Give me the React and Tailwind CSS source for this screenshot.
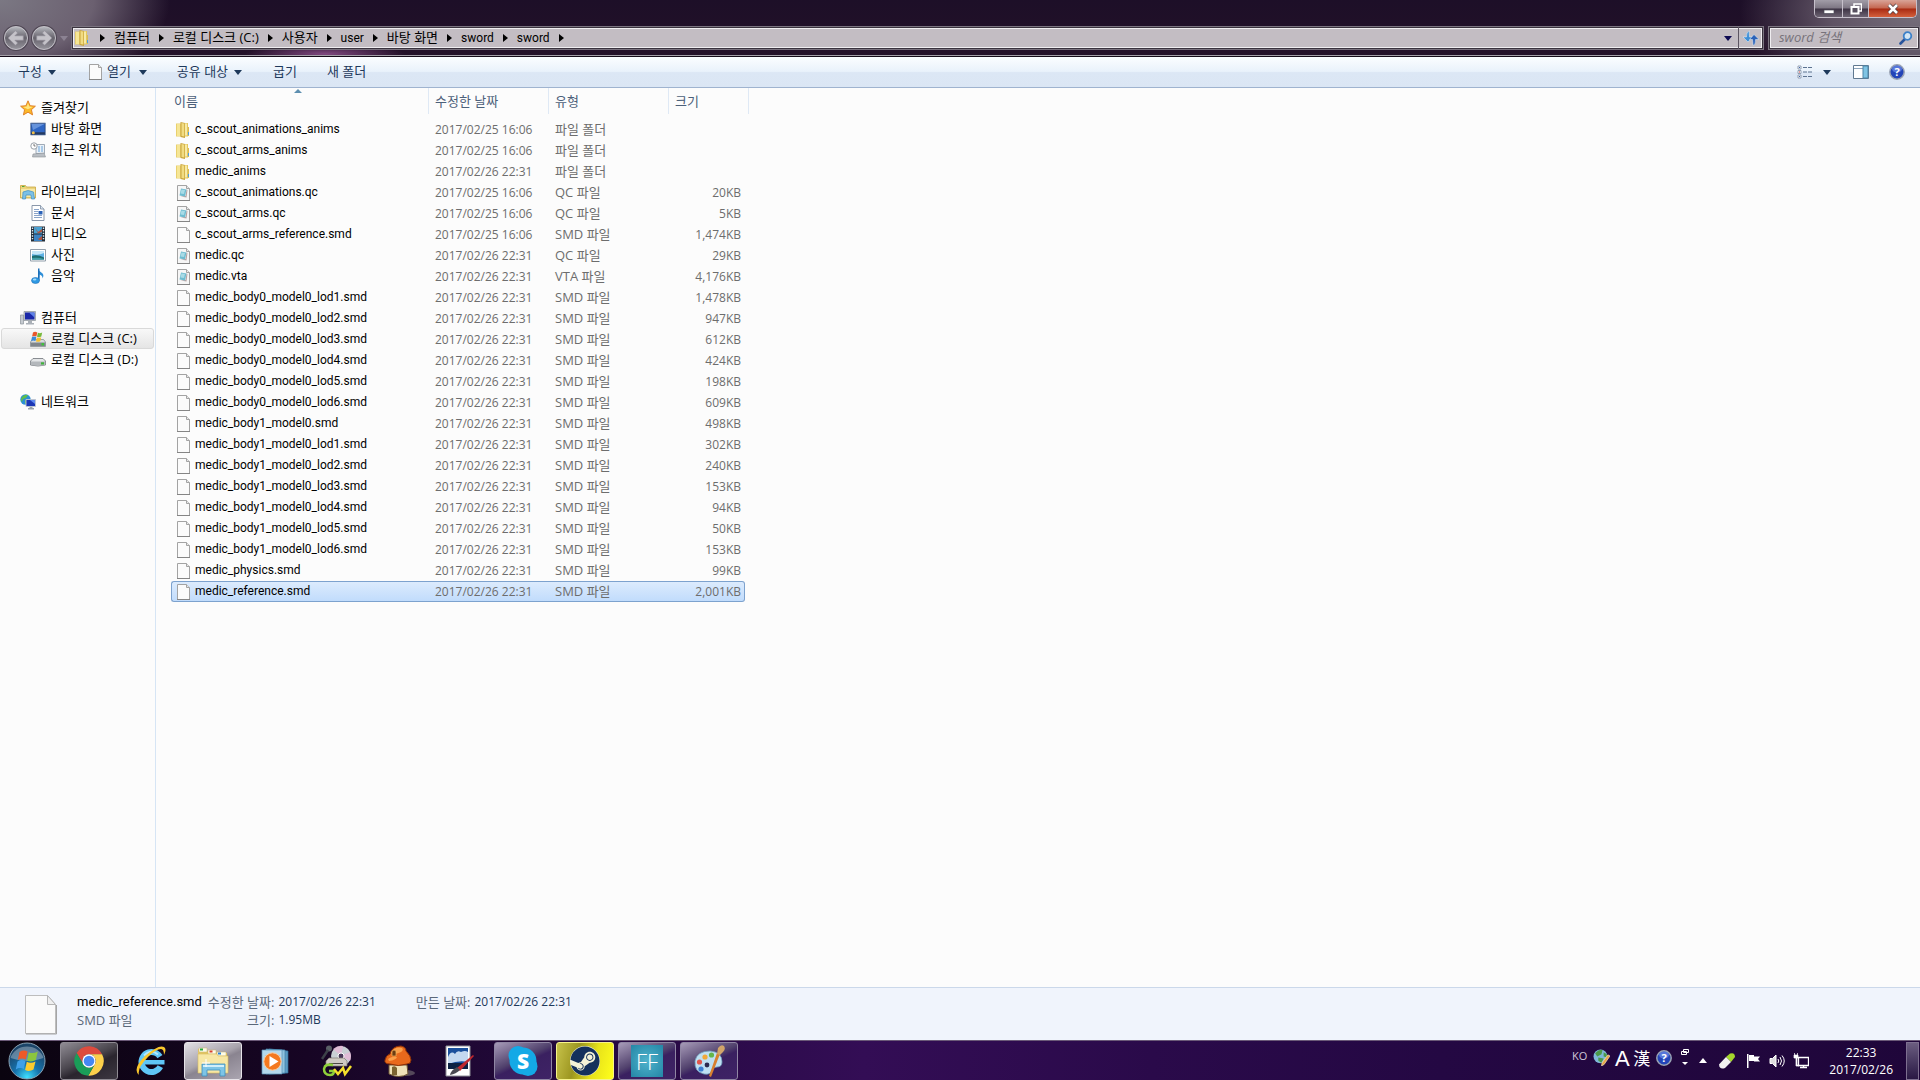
import React, { useState } from "react";
import { FaSteam } from "react-icons/fa";

const FILES = [
  ["c_scout_animations_anims", "2017/02/25 16:06", "파일 폴더", "", "folder"],
  ["c_scout_arms_anims", "2017/02/25 16:06", "파일 폴더", "", "folder"],
  ["medic_anims", "2017/02/26 22:31", "파일 폴더", "", "folder"],
  ["c_scout_animations.qc", "2017/02/25 16:06", "QC 파일", "20KB", "note"],
  ["c_scout_arms.qc", "2017/02/25 16:06", "QC 파일", "5KB", "note"],
  ["c_scout_arms_reference.smd", "2017/02/25 16:06", "SMD 파일", "1,474KB", "file"],
  ["medic.qc", "2017/02/26 22:31", "QC 파일", "29KB", "note"],
  ["medic.vta", "2017/02/26 22:31", "VTA 파일", "4,176KB", "note"],
  ["medic_body0_model0_lod1.smd", "2017/02/26 22:31", "SMD 파일", "1,478KB", "file"],
  ["medic_body0_model0_lod2.smd", "2017/02/26 22:31", "SMD 파일", "947KB", "file"],
  ["medic_body0_model0_lod3.smd", "2017/02/26 22:31", "SMD 파일", "612KB", "file"],
  ["medic_body0_model0_lod4.smd", "2017/02/26 22:31", "SMD 파일", "424KB", "file"],
  ["medic_body0_model0_lod5.smd", "2017/02/26 22:31", "SMD 파일", "198KB", "file"],
  ["medic_body0_model0_lod6.smd", "2017/02/26 22:31", "SMD 파일", "609KB", "file"],
  ["medic_body1_model0.smd", "2017/02/26 22:31", "SMD 파일", "498KB", "file"],
  ["medic_body1_model0_lod1.smd", "2017/02/26 22:31", "SMD 파일", "302KB", "file"],
  ["medic_body1_model0_lod2.smd", "2017/02/26 22:31", "SMD 파일", "240KB", "file"],
  ["medic_body1_model0_lod3.smd", "2017/02/26 22:31", "SMD 파일", "153KB", "file"],
  ["medic_body1_model0_lod4.smd", "2017/02/26 22:31", "SMD 파일", "94KB", "file"],
  ["medic_body1_model0_lod5.smd", "2017/02/26 22:31", "SMD 파일", "50KB", "file"],
  ["medic_body1_model0_lod6.smd", "2017/02/26 22:31", "SMD 파일", "153KB", "file"],
  ["medic_physics.smd", "2017/02/26 22:31", "SMD 파일", "99KB", "file"],
  ["medic_reference.smd", "2017/02/26 22:31", "SMD 파일", "2,001KB", "file"],
];

const CRUMBS = ["컴퓨터", "로컬 디스크 (C:)", "사용자", "user", "바탕 화면", "sword", "sword"];

/* ---------- small icons (16px grid) ---------- */

function Icon({ children, className = "w-4 h-4" }) {
  return (
    <svg viewBox="0 0 16 16" className={`${className} shrink-0`} aria-hidden="true">
      {children}
    </svg>
  );
}

function FolderIcon() {
  return (
    <Icon>
      <path d="M0 1.500h5v13H0z" fill="#e9d06e" />
      <path d="M1 2h3v12H1z" fill="#f6e696" />
      <path d="M4.500 0l4.500 1v15l-4.500-1z" fill="#c9a43a" />
      <path d="M5.500 1l2.500 .5v13l-2.500-.5z" fill="#f1dc83" />
      <path d="M8.500 1H12v13.500H8.500z" fill="#e3c75e" />
      <path d="M9 1.500h2v12H9z" fill="#f7eaa6" />
      <path d="M12 5h1v9h-1z" fill="#d9bb55" />
      <path d="M12 10h1v3h-1z" fill="#4f9fe0" />
    </Icon>
  );
}

function FileIcon() {
  return (
    <Icon>
      <path d="M1.500 .5h9l3 3v12h-12z" fill="#fbfbfb" stroke="#a3a3a3" />
      <path d="M10.500 .5v3h3" fill="#e8e8e8" stroke="#a3a3a3" />
      <path d="M1 15.500h13" stroke="#858585" />
    </Icon>
  );
}

function NoteIcon() {
  return (
    <Icon>
      <path d="M1.500 .5h9l3 3v12h-12z" fill="#f6f6f6" stroke="#a3a3a3" />
      <path d="M10.500 .5v3h3" fill="#e8e8e8" stroke="#a3a3a3" />
      <path d="M1 15.500h13" stroke="#858585" />
      <path d="M10.500 4.500l1 .5-1 7.500-6-1 5-.5z" fill="#b9a3a3" />
      <path d="M5 3.500l5.500 1-1.500 7-5.500-1z" fill="#6fbcd0" />
      <path d="M5.500 4.500l3.500 .5-1 4-3.500-.5z" fill="#a9dbe6" />
    </Icon>
  );
}

const FILE_ICONS = { folder: FolderIcon, note: NoteIcon, file: FileIcon };

function StarIcon() {
  return (
    <Icon>
      <path d="M8 .8l2.100 4.900 5.300.5-4 3.500 1.200 5.200L8 12.200l-4.600 2.700 1.200-5.200-4-3.500 5.300-.5z" fill="#fbb829" stroke="#dd7b22" strokeWidth=".9" />
      <path d="M8 3l1.300 3.500 3.600.4-5 2.300-4.800-2.300 3.600-.4z" fill="#ffe680" />
    </Icon>
  );
}

function DesktopIcon() {
  return (
    <Icon>
      <path d="M.5 2h15v12h-15z" fill="#2a4f8f" stroke="#7f93b3" strokeWidth=".8" />
      <path d="M1.500 3h13v8h-13z" fill="#2f66c4" />
      <path d="M1.500 3h13L3 9z" fill="#7ea7e6" opacity=".7" />
      <path d="M1 11.500h14v2h-14z" fill="#243a60" />
      <circle cx="3.300" cy="11.800" r="1.500" fill="#f2c04a" />
    </Icon>
  );
}

function RecentIcon() {
  return (
    <Icon>
      <path d="M6 2.500h8.500v9h-8.500z" fill="#e9f1f8" stroke="#8c98a6" strokeWidth=".8" />
      <path d="M8 5h2M11 5h2M8 7h2M11 7h2M8 9h2M11 9h2" stroke="#6aa3d8" />
      <path d="M3 12l11-1 1.500 4h-13z" fill="#b9bec4" stroke="#8b9096" strokeWidth=".6" />
      <circle cx="4" cy="4" r="3.200" fill="#fff" stroke="#8f979f" strokeWidth=".9" />
      <path d="M4 2v2h1.500" fill="none" stroke="#555" strokeWidth=".8" />
    </Icon>
  );
}

function LibraryIcon() {
  return (
    <Icon>
      <path d="M.5 1.500h5l1 1.500h9v11h-15z" fill="#ecd47b" stroke="#c9a640" strokeWidth=".8" />
      <path d="M1 5h14v8h-14z" fill="#f7e8a6" />
      <path d="M2 2.500h2.500" stroke="#4eaa3f" />
      <path d="M3 8q5-3 10.500 0l1 7h-3l-.5-4h-5l-.5 4h-3z" fill="#7cc0e6" stroke="#3f8fc4" strokeWidth=".7" />
    </Icon>
  );
}

function DocIcon() {
  return (
    <Icon>
      <path d="M2 .5h8.500l3.500 3.500v11.500h-12z" fill="#fff" stroke="#7e8ca0" strokeWidth=".9" />
      <path d="M10.500 .5v3.500h3.500" fill="#dde7f2" stroke="#7e8ca0" strokeWidth=".8" />
      <path d="M4 4.500h5M4 6.500h4M4 8.500h4M4 10.500h8M4 12.500h8" stroke="#8aa4c8" />
      <path d="M8.500 6h4v3.500h-4z" fill="#2a62b8" />
    </Icon>
  );
}

function VideoIcon() {
  return (
    <Icon>
      <path d="M1 .5h14v15h-14z" fill="#222d38" />
      <path d="M4 1h8v6.500h-8z" fill="#49a1d2" />
      <path d="M4 8.500h8v6.500h-8z" fill="#3a83c4" />
      <path d="M4.500 1l3.500 5 4-3v3l-4 1.500zM4.500 9l3.500 4 4-3v4h-3z" fill="#b2543e" />
      <path d="M2.500 1.500v13M13.500 1.500v13" stroke="#dfe7ee" strokeWidth="1.400" strokeDasharray="1.400 1.200" />
    </Icon>
  );
}

function PictureIcon() {
  return (
    <Icon>
      <path d="M.5 2.500h15v11.500h-15z" fill="#fff" stroke="#8794a2" strokeWidth=".9" />
      <path d="M2 4h12v8.500h-12z" fill="#5cb0e4" />
      <path d="M2 4h12v2q-6 3-12 1z" fill="#c5e6f7" />
      <path d="M2 9q5-2 12 1.500v2h-12z" fill="#1d6d72" />
      <path d="M2 11q6-1 12 1v.5h-12z" fill="#3fa0a8" />
    </Icon>
  );
}

function MusicIcon() {
  return (
    <Icon>
      <path d="M8 .5q1 3 4 4.500 2.500 2 .5 5.500.3-3-3-4v6z" fill="#2f8fd8" />
      <path d="M8 .5h1.500v12h-1.500z" fill="#1d6fb8" />
      <ellipse cx="5.500" cy="12.500" rx="4" ry="3" fill="#2f9ae4" stroke="#1d6fb8" strokeWidth=".6" />
      <ellipse cx="4.600" cy="11.600" rx="1.800" ry="1" fill="#a5dbfa" />
    </Icon>
  );
}

function ComputerIcon() {
  return (
    <Icon>
      <path d="M.5 5h3v9h-3z" fill="#c5cad0" stroke="#8b9299" strokeWidth=".7" />
      <path d="M4 1.500h11.500v9h-11.500z" fill="#c9ced4" stroke="#8b9299" strokeWidth=".7" />
      <path d="M5 2.500h9.500v7h-9.500z" fill="#1a28a8" />
      <path d="M9 2.500h5.500v5z" fill="#5f83e8" />
      <path d="M8 11h4v2h2v1.500h-8v-1.500h2z" fill="#aab0b7" />
    </Icon>
  );
}

function DriveCIcon() {
  return (
    <Icon>
      <path d="M2.500 8.500h11l2 2.500v4.500h-15v-4.500z" fill="#d8dbde" stroke="#7e8489" strokeWidth=".7" />
      <path d="M.8 11.500h14.400v3.600h-14.400z" fill="#80868c" />
      <path d="M11.500 12h2.500v2.500h-2.500z" fill="#3fc23a" />
      <path d="M3 1.500q2-1.500 4.300 0l-.9 4q-2.200-1.200-4.300 0z" fill="#e8562a" />
      <path d="M7.900 1.800q2.100 1 4.300-.2l-.9 4q-2.200 1-4.300.2z" fill="#76b93a" />
      <path d="M2 6.100q2-1.200 4.300 0l-.9 4q-2.200-1.200-4.300 0z" fill="#3a8ad8" />
      <path d="M6.900 6.400q2.100 1 4.300-.2l-.9 4q-2.200 1-4.300.2z" fill="#f5c02e" />
    </Icon>
  );
}

function DriveDIcon() {
  return (
    <Icon>
      <path d="M3 6.500h10l2.500 2.500v4q-7.500 2-15 0v-4z" fill="#e4e6e8" stroke="#6f7479" strokeWidth=".8" />
      <path d="M.8 9.500h14.400v3.200q-7 1.800-14.400 0z" fill="#b4b8bc" />
      <path d="M11 10.300h3v2.200h-3z" fill="#3fb23a" />
    </Icon>
  );
}

function NetworkIcon() {
  return (
    <Icon>
      <circle cx="5.500" cy="5.500" r="5.200" fill="#2b8fd6" />
      <path d="M2 3q3-3 6-2l-2 3-3 1-1 3q-2-2 0-5zM5 6l4 1-2 3.500-2-1z" fill="#5fbf4a" />
      <path d="M6 5.500h9.500v7h-9.500z" fill="#1b36b5" stroke="#c2cad2" strokeWidth=".9" />
      <path d="M10 6h5v4z" fill="#5f8bf0" />
      <path d="M9.500 13h3v1h1.500v1.500h-6v-1.500h1.500z" fill="#9aa3ab" />
    </Icon>
  );
}

function Caret({ className = "fill-[#1e395b]" }) {
  return (
    <svg viewBox="0 0 8 5" className={`w-2 h-[5px] shrink-0 ${className}`} aria-hidden="true">
      <path d="M0 0h8L4 5z" />
    </svg>
  );
}

function HelpIcon() {
  return (
    <Icon>
      <circle cx="8" cy="8" r="7.200" fill="#2344b8" stroke="#9aa3b4" strokeWidth="1.500" />
      <ellipse cx="8" cy="5" rx="5" ry="3.500" fill="#6c8ce8" opacity=".7" />
      <text x="8" y="12" textAnchor="middle" fontSize="11" fontWeight="700" fontFamily="Open Sans" fill="#fff">?</text>
    </Icon>
  );
}

/* ---------- window chrome ---------- */

function NavArrow({ label, flip }) {
  return (
    <button type="button" aria-label={label} className="w-6 h-6 rounded-full border border-[#c4c2c8] ring-1 ring-[#4d4552] bg-linear-to-b from-[#b5b7bd] via-[#66636c] to-[#96949c] grid place-items-center">
      <svg viewBox="0 0 16 16" className={flip ? "w-[18px] h-[18px] rotate-180" : "w-[18px] h-[18px]"} aria-hidden="true">
        <path d="M7.500 1.500L1 8l6.500 6.500 2-2L7 10h7.500V6H7l2.500-2.500z" fill="#c5c3c9" stroke="#918d98" strokeWidth=".6" />
      </svg>
    </button>
  );
}

const FIELD = "border border-[#7b7480] bg-[#c3bdc3] shadow-[inset_0_0_0_1px_#3a333e,inset_0_0_0_2px_#efedf0]";

function TitleBar() {
  return (
    <header className="h-[57px] flex flex-col bg-[radial-gradient(ellipse_170px_100px_at_0_0,#7b7883,#6b6070_55%,transparent),radial-gradient(ellipse_180px_100px_at_100%_20%,#77707c,#5f5364_50%,transparent),radial-gradient(ellipse_80px_10px_at_325px_54px,#80487f,transparent),linear-gradient(#1d0f28,#241128)] border-b border-[#140a18]">
      <div className="flex justify-end h-[26px] pr-[3px]">
        <div className="flex h-[18px] border border-t-0 border-[#c6c0cb] rounded-b-[5px] overflow-hidden">
          <button type="button" aria-label="최소화" className="w-7 border-r border-[#c6c0cb] bg-[linear-gradient(#a29da8,#7d7683_48%,#3d3344_52%,#6c6372)] grid place-items-center">
            <svg viewBox="0 0 12 12" className="w-3 h-3" aria-hidden="true">
              <path d="M1 7h10v3.500H1z" fill="#fff" stroke="#4b4b58" strokeWidth=".7" />
            </svg>
          </button>
          <button type="button" aria-label="이전 크기로 복원" className="w-[26px] border-r border-[#c6c0cb] bg-[linear-gradient(#a29da8,#7d7683_48%,#3d3344_52%,#6c6372)] grid place-items-center">
            <svg viewBox="0 0 12 12" className="w-3 h-3" aria-hidden="true">
              <path d="M4 1h7.500v7H4z" fill="none" stroke="#fff" strokeWidth="1.500" />
              <path d="M1.500 4h7v6.500h-7z" fill="#57505f" stroke="#fff" strokeWidth="2" />
            </svg>
          </button>
          <button type="button" aria-label="닫기" className="w-[47px] bg-[linear-gradient(#d9a498,#c4664f_48%,#a82a12_52%,#d4603c)] grid place-items-center">
            <svg viewBox="0 0 12 12" className="w-3 h-3" aria-hidden="true">
              <path d="M2 2l8 8M10 2l-8 8" stroke="#4b3a40" strokeWidth="4" />
              <path d="M2 2l8 8M10 2l-8 8" stroke="#fff" strokeWidth="2.600" />
            </svg>
          </button>
        </div>
      </div>
      <div className="flex items-center h-6">
        <div className="flex items-center gap-1 pl-1 pr-[3px]">
          <NavArrow label="뒤로" />
          <NavArrow label="앞으로" flip />
          <button type="button" aria-label="최근 페이지" className="grid">
            <Caret className="fill-[#8b8292]" />
          </button>
        </div>
        <nav className={`flex-1 flex items-center h-6 pl-[3px] text-black ${FIELD}`}>
          <FolderIcon />
          <CrumbArrow />
          {CRUMBS.map((name, i) => (
            <React.Fragment key={i}>
              <button
                type="button"
                className={
                  /^[a-z]+$/.test(name)
                    ? "whitespace-nowrap text-xs font-['Roboto']"
                    : "whitespace-nowrap"
                }
              >
                {name}
              </button>
              <CrumbArrow />
            </React.Fragment>
          ))}
          <button type="button" aria-label="이전 위치" className="ml-auto mr-1.5">
            <Caret className="fill-[#0d0a52]" />
          </button>
          <button type="button" aria-label="새로 고침" className="w-[25px] h-full border-l border-[#5c5561] grid place-items-center">
            <Icon>
              <path d="M6.500 1Q3 2 3.500 7H0l5 5 4.500-5H6.500Q6 3 6.500 1z" fill="#3f8fd6" stroke="#e7f2fb" strokeWidth=".5" />
              <path d="M10 15.500q3-1 2.500-6H16l-5-5-4.500 5h3q.5 4 .5 6z" fill="#2c62b8" stroke="#e7f2fb" strokeWidth=".5" />
            </Icon>
          </button>
        </nav>
        <label className={`w-[152px] h-6 ml-1 flex items-center pl-2.5 pr-1.5 ${FIELD}`}>
          <input type="search" aria-label="sword 검색" placeholder="sword 검색" className="min-w-0 flex-1 italic bg-transparent outline-none placeholder:text-[#77727a]" />
          <svg viewBox="0 0 14 14" className="w-3.5 h-3.5 shrink-0" aria-hidden="true">
            <path d="M6 8L1.500 12.500" stroke="#27549c" strokeWidth="2.600" strokeLinecap="round" />
            <circle cx="8.500" cy="5" r="3.800" fill="#d4e6f4" stroke="#3c80c8" strokeWidth="1.800" />
          </svg>
        </label>
      </div>
      <div className="mt-auto h-px bg-[#a5a0a8]" />
    </header>
  );
}

function CrumbArrow() {
  return (
    <svg viewBox="0 0 5 8" className="w-[5px] h-2 mx-[9px] shrink-0" aria-hidden="true">
      <path d="M0 0l5 4-5 4z" />
    </svg>
  );
}

function Toolbar() {
  return (
    <div className="h-[31px] flex items-center pl-[18px] pr-[15px] text-[#1e395b] bg-[linear-gradient(#fbfdff,#e9f2fb_48%,#dce7f5_52%,#dbe6f4)] border-b border-[#9fb3cf]">
      <button type="button" className="flex items-center gap-1.5">구성 <Caret /></button>
      <button type="button" className="ml-8 flex items-center gap-[3px]"><FileIcon /> 열기</button>
      <button type="button" aria-label="열기 옵션" className="ml-2"><Caret /></button>
      <button type="button" className="ml-[30px] flex items-center gap-1.5">공유 대상 <Caret /></button>
      <button type="button" className="ml-[31px]">굽기</button>
      <button type="button" className="ml-[30px]">새 폴더</button>
      <div className="ml-auto flex items-center">
        <button type="button" aria-label="보기 변경">
          <Icon>
            <path d="M1 2h3v3H1zM1 6.500h3v3H1zM1 11h3v3H1z" fill="#fff" stroke="#7d8da3" strokeWidth=".8" />
            <path d="M2 3.500h1M2 12.500h1" stroke="#3a62a8" />
            <path d="M2 8h1" stroke="#c33" />
            <path d="M6 3.500h4M11 3.500h4M6 8h4M11 8h4M6 12.500h4M11 12.500h4" stroke="#5d7390" />
          </Icon>
        </button>
        <button type="button" aria-label="추가 옵션" className="ml-2.5"><Caret /></button>
        <button type="button" aria-label="미리 보기 창 표시" className="ml-[22px]">
          <Icon>
            <path d="M.5 1.500h15v13h-15z" fill="#fdfeff" stroke="#5f7890" />
            <path d="M1 4.500h9" stroke="#8ba3ba" />
            <path d="M10 2h5v12h-5z" fill="#7fc4e4" stroke="#4f86a8" />
          </Icon>
        </button>
        <button type="button" aria-label="도움말" className="ml-5"><HelpIcon /></button>
      </div>
    </div>
  );
}

/* ---------- navigation pane ---------- */

const NAV = [
  ["즐겨찾기", StarIcon, [["바탕 화면", DesktopIcon], ["최근 위치", RecentIcon]]],
  ["라이브러리", LibraryIcon, [["문서", DocIcon], ["비디오", VideoIcon], ["사진", PictureIcon], ["음악", MusicIcon]]],
  ["컴퓨터", ComputerIcon, [["로컬 디스크 (C:)", DriveCIcon], ["로컬 디스크 (D:)", DriveDIcon]]],
  ["네트워크", NetworkIcon, []],
];

function Sidebar() {
  return (
    <aside className="w-[156px] shrink-0 border-r border-[#d6e5f5] pt-[9px] px-px flex flex-col gap-[21px] text-black">
      {NAV.map(([title, TitleIcon, items]) => (
        <div key={title}>
          <button type="button" className="w-full h-[21px] flex items-center gap-[5px] pl-[19px]">
            <TitleIcon /> {title}
          </button>
          {items.map(([name, ItemIcon]) => (
            <button
              key={name}
              type="button"
              className={
                name === "로컬 디스크 (C:)"
                  ? "w-full h-[21px] flex items-center gap-[5px] pl-7 whitespace-nowrap border border-[#d9d9d9] rounded-[3px] bg-linear-to-b from-[#f8f8f8] to-[#e5e5e5]"
                  : "w-full h-[21px] flex items-center gap-[5px] pl-[29px] whitespace-nowrap"
              }
            >
              <ItemIcon /> {name}
            </button>
          ))}
        </div>
      ))}
    </aside>
  );
}

/* ---------- file list ---------- */

function FileList() {
  const [selected, setSelected] = useState("medic_reference.smd");
  const head = "h-[26px] leading-[26px] border-r border-[#dfe9f5]";

  return (
    <main className="flex-1 min-w-0 pl-[15px]">
      <table className="table-fixed w-[574px] border-separate border-spacing-0 text-left">
        <colgroup>
          <col className="w-[258px]" />
          <col className="w-[120px]" />
          <col className="w-[120px]" />
          <col className="w-[76px]" />
        </colgroup>
        <thead className="text-[#4c607a]">
          <tr className="h-[31px] align-top">
            <th className="p-0 font-normal relative">
              <div className={`${head} pl-[3px]`}>이름</div>
              <svg viewBox="0 0 8 4" className="absolute left-[123px] top-px w-2 h-1" aria-hidden="true">
                <path d="M4 0l4 4H0z" fill="#5e8fb0" />
              </svg>
            </th>
            <th className="p-0 font-normal"><div className={`${head} pl-1.5`}>수정한 날짜</div></th>
            <th className="p-0 font-normal"><div className={`${head} pl-1.5`}>유형</div></th>
            <th className="p-0 font-normal"><div className={`${head} pl-1.5 -mr-1`}>크기</div></th>
          </tr>
        </thead>
        <tbody className="text-[#6d6d6d]">
          {FILES.map(([name, date, type, size, kind]) => {
            const FileTypeIcon = FILE_ICONS[kind];
            const on = name === selected;
            const cell = on
              ? "h-[21px] p-0 border-y border-[#7da2ce] bg-linear-to-b from-[#dcebfd] to-[#c1dcfc]"
              : "h-[21px] p-0 border-y border-transparent";
            return (
              <tr key={name} onClick={() => setSelected(name)} className="leading-[19px] whitespace-nowrap">
                <td className={`${cell} border-l rounded-l-[3px]`}>
                  <div className="flex items-center gap-[3px] pl-1 text-xs leading-[19px] text-black font-['Roboto']">
                    <FileTypeIcon /> {name}
                  </div>
                </td>
                <td className={`${cell} text-xs leading-[19px]`}><div className="pl-1.5">{date}</div></td>
                <td className={cell}><div className="pl-1.5">{type}</div></td>
                <td className={`${cell} border-r rounded-r-[3px] text-xs leading-[19px] text-right`}>
                  <div className="pr-[3px]">{size}</div>
                </td>
              </tr>
            );
          })}
        </tbody>
      </table>
    </main>
  );
}

function DetailsPane() {
  return (
    <section className="h-[53px] shrink-0 flex items-start pl-[25px] pt-[5px] leading-[18px] text-[#5a6779] bg-[#f0f4fc] border-t border-[#cbd8ea]">
      <svg viewBox="0 0 32 42" className="w-8 h-[42px] mr-5" aria-hidden="true">
        <path d="M.5 2.500h22l8 9v29h-30z" fill="#fafafa" stroke="#bdbdbd" />
        <path d="M22.500 2.500v9h8z" fill="#efefef" stroke="#b5b5b5" />
        <path d="M1 41h30.500v-29" fill="none" stroke="#a5a5a5" />
      </svg>
      <div>
        <div className="text-black font-['Roboto']">medic_reference.smd</div>
        <div>SMD 파일</div>
      </div>
      <dl className="grid grid-cols-[auto_auto] gap-x-1 ml-1.5 text-right">
        <dt>수정한 날짜:</dt>
        <dd className="text-xs leading-[18px] text-left text-[#1e395b]">2017/02/26 22:31</dd>
        <dt>크기:</dt>
        <dd className="text-xs leading-[18px] text-left text-[#1e395b]">1.95MB</dd>
      </dl>
      <dl className="flex gap-x-1 ml-10">
        <dt>만든 날짜:</dt>
        <dd className="text-xs leading-[18px] text-[#1e395b]">2017/02/26 22:31</dd>
      </dl>
    </section>
  );
}

/* ---------- taskbar ---------- */

function Big({ children }) {
  return (
    <svg viewBox="0 0 32 32" className="w-8 h-8" aria-hidden="true">
      {children}
    </svg>
  );
}

function StartOrb() {
  return (
    <svg viewBox="0 0 40 40" className="w-10 h-10" aria-hidden="true">
      <defs>
        <radialGradient id="orb" cx=".5" cy=".95" r=".8">
          <stop offset="0" stopColor="#3fe0ff" />
          <stop offset=".45" stopColor="#1673ad" />
          <stop offset="1" stopColor="#1b4468" />
        </radialGradient>
      </defs>
      <circle cx="20" cy="20" r="18" fill="url(#orb)" stroke="#8aa3b5" />
      <path d="M3.500 17a17 15 0 0 1 33 0q-16 6-33 0z" fill="#b9c8d4" opacity=".45" />
      <path d="M12.500 11q4-2.500 8-.5l-1.700 8q-4-2-8 .5z" fill="#ee5a28" />
      <path d="M21.800 11.200q4 2 9-.7l-2 8.500q-4.500 2.500-8.700 .5z" fill="#8cc63e" />
      <path d="M10.500 20.500q4-2.500 8-.5l-1.700 8q-4-2-8 .5z" fill="#3fa0e8" />
      <path d="M19.800 20.700q4 2 8.700-.3l-2 8.100q-4.200 2.500-8.400 .5z" fill="#fccb2e" />
    </svg>
  );
}

function ChromeIcon() {
  return (
    <svg viewBox="0 0 48 48" className="w-8 h-8" aria-hidden="true">
      <path d="M24 14h19.600A22 22 0 0 0 5.500 12L15.300 29A10 10 0 0 1 24 14z" fill="#dd4b3e" />
      <path d="M24 14h19.600A22 22 0 0 1 22.900 46L32.700 29A10 10 0 0 0 24 14z" fill="#fcd04b" />
      <path d="M5.500 12A22 22 0 0 0 22.900 46L32.700 29A10 10 0 0 1 15.300 29z" fill="#1a9d58" />
      <circle cx="24" cy="24" r="10" fill="#fff" />
      <circle cx="24" cy="24" r="8" fill="#4587f3" />
    </svg>
  );
}

function ExplorerIcon() {
  return (
    <Big>
      <path d="M1 4h8l1 2h9l1 2h10v20H1z" fill="#e4c766" />
      <path d="M2 3h8v4H2zM11 5h8v4h-8zM20 7h9v4h-9z" fill="#fdfbe9" stroke="#c9b06a" strokeWidth=".5" />
      <path d="M3 4.500h3" stroke="#27a73a" strokeWidth="2" />
      <path d="M12.500 6.500h3" stroke="#d8402e" strokeWidth="2" />
      <path d="M21 8.500h3" stroke="#2b82d4" strokeWidth="2" />
      <path d="M1 9h19l1 2h10v17H1z" fill="#f7e7a5" stroke="#d8bc5c" strokeWidth=".6" />
      <path d="M5 19h23v12h-5v-6H10v6H5z" fill="#7dc4e6" stroke="#3e8fbe" strokeWidth=".8" />
      <path d="M6 20h21v2H6z" fill="#d0eefa" />
      <path d="M9 14v8M5 18h8" stroke="#fff" />
    </Big>
  );
}

function IeIcon() {
  return (
    <Big>
      <circle cx="16.500" cy="17" r="10" fill="none" stroke="#5fc6f6" strokeWidth="6" strokeDasharray="52 11" transform="rotate(28 16.500 17)" />
      <path d="M9 15h20.500v4.500H9z" fill="#5fc6f6" />
      <path d="M9 10.500q7-7 14-1" fill="none" stroke="#b6e8fc" strokeWidth="2" />
      <path d="M4 30Q-3 24 10 11 24-1 29 2q3 2 0 8 0-6-3-6-5 0-13 8Q2 23 4 30z" fill="#f8c62c" />
    </Big>
  );
}

function MediaIcon() {
  return (
    <Big>
      <path d="M10 4l19 2v22l-19 1z" fill="#5b9cc4" stroke="#2e6b97" strokeWidth=".7" />
      <path d="M7 4l19 1v23l-19 1z" fill="#8fc3de" stroke="#3f7fa8" strokeWidth=".7" />
      <path d="M3 5h20v24H3z" fill="#b4d8ec" stroke="#5891b5" strokeWidth=".7" />
      <circle cx="13.500" cy="16.500" r="8.700" fill="#f47920" stroke="#fbd0a5" />
      <path d="M10.500 11l9 5.500-9 5.500z" fill="#fff" />
    </Big>
  );
}

function GoldWaveIcon() {
  return (
    <Big>
      <circle cx="20" cy="11" r="10" fill="#c9cfd4" />
      <path d="M20 11L12 4q5-4 10-3zM20 11l9 5q2-5 0-9z" fill="#e6b7d6" opacity=".8" />
      <circle cx="20" cy="11" r="3" fill="#4b3a5a" stroke="#fff" />
      <circle cx="8" cy="3.500" r="3" fill="#5a5f66" />
      <path d="M7 5L1 14" stroke="#3c4148" strokeWidth="2.500" />
      <path d="M8 13h15l3 3v5H5v-5z" fill="#cfc9c2" stroke="#807a74" strokeWidth=".7" />
      <path d="M8 18.500h14" stroke="#4b4643" />
      <path d="M12 20q-8-2-9 4 0 6 6 6 4 0 4-4H8" fill="none" stroke="#8fd03a" strokeWidth="2.500" />
      <path d="M13 24l4 5 5-6 2 6 6-8" fill="none" stroke="#f5e02c" strokeWidth="2.500" />
    </Big>
  );
}

function MushroomIcon() {
  return (
    <Big>
      <ellipse cx="23" cy="28" rx="9" ry="3" fill="#54485a" />
      <path d="M6 20h18l1 9q-9 5-19 0z" fill="#efe2b8" stroke="#6b5330" />
      <path d="M9 22q3-2 5 1v7H9z" fill="#7b6430" />
      <path d="M2 15q1-5 5-6 2-8 11-8 5 1 5 5 5 5 5 9 0 4-4 4-9 3-17 0-6 0-5-4z" fill="#e8691c" stroke="#8b3108" />
      <path d="M8 8q4-7 11-5 2 2-1 4-5 3-10 1zM5 14q4-3 9-2-1 3-8 4z" fill="#fba04a" />
      <path d="M9 6q2-2 4 0v5H9z" fill="#6c3c12" stroke="#f1b45c" strokeWidth=".7" />
    </Big>
  );
}

function PaintDocIcon() {
  return (
    <Big>
      <path d="M1 1h24v30H1z" fill="#fff" stroke="#8e8e96" />
      <path d="M3 3h20v19H3z" fill="#1b4f9c" />
      <path d="M3 12q3-7 7-3 2-4 6-2 4-2 7 0v10q-9-2-20 2z" fill="#c4d8f0" />
      <path d="M3 18h20v6H3z" fill="#0d2142" />
      <path d="M12 23L28 10l1 1-14 15z" fill="#c0282e" />
      <path d="M12 22l3 3q-4 4-10 5 1-5 7-8z" fill="#4b4a52" />
    </Big>
  );
}

function SkypeIcon() {
  return (
    <Big>
      <circle cx="11" cy="10.500" r="9.500" fill="#14a9e6" />
      <circle cx="21" cy="21.500" r="9.500" fill="#14a9e6" />
      <circle cx="16" cy="16" r="13.500" fill="#14a9e6" />
      <text x="16" y="23.500" textAnchor="middle" fontSize="21" fontWeight="800" fontFamily="Open Sans" fill="#fff">S</text>
    </Big>
  );
}

function SteamIcon() {
  return (
    <span className="w-[30px] h-[30px] rounded-full bg-[#f4f2d8] grid place-items-center">
      <FaSteam className="w-[30px] h-[30px] text-[#14305c]" />
    </span>
  );
}

function PaintIcon() {
  return (
    <Big>
      <path d="M2 16Q4 6 17 6q12 1 12 11 0 5-5 5-4 0-5 3-1 5-8 4Q1 27 2 16z" fill="#bfe0f2" stroke="#6d9cba" strokeWidth=".8" />
      <circle cx="6.500" cy="17" r="2.600" fill="#e2574c" />
      <circle cx="12" cy="12" r="2.600" fill="#f2a83a" />
      <circle cx="18.500" cy="10" r="2.600" fill="#63b64a" />
      <circle cx="14" cy="20" r="2.400" fill="#2b2a4f" />
      <circle cx="8" cy="24" r="2.600" fill="#3c7ed0" />
      <path d="M24 8l3 1-9 23-2-1z" fill="#d8802e" />
      <path d="M24 9l1-6q3-4 6-2 2 3-1 6l-3 3z" fill="#d2a56a" />
    </Big>
  );
}

const OPEN = "border-[#9086a4] bg-[linear-gradient(155deg,#a79bb8,#50406c_45%,#3a2060_55%,#3f2366)]";

const TASKS = [
  ["Chrome", ChromeIcon, "border-[#8f8b93] bg-[linear-gradient(155deg,#908c94,#4a464e_45%,#2a252e_60%,#3d3842)]"],
  ["Internet Explorer", IeIcon, "border-transparent"],
  ["Windows 탐색기", ExplorerIcon, "border-[#e6e3e8] bg-[linear-gradient(155deg,#e2e0e4,#a8a3ac_45%,#8a8490_55%,#aaa5b0)]"],
  ["Windows Media Player", MediaIcon, "border-transparent"],
  ["GoldWave", GoldWaveIcon, "border-transparent"],
  ["MapleStory", MushroomIcon, "border-transparent"],
  ["Paint.exe", PaintDocIcon, "border-transparent"],
  ["Skype", SkypeIcon, OPEN],
  ["Steam", SteamIcon, "border-[#f6f38a] bg-[linear-gradient(105deg,#c7c24a,#9c9620_35%,#e8e21a_65%,#ffff1c)]"],
  ["FF", null, OPEN],
  ["그림판", PaintIcon, OPEN],
];

function Taskbar() {
  return (
    <footer className="h-10 shrink-0 flex items-center pl-[7px] pr-px text-white border-t border-[#6b5a78] bg-[linear-gradient(90deg,#0a040f,#170524_16%,#24093e_30%,#330d55_45%,#2a0a4a_60%,#240843_75%,#1f063a)] overflow-hidden">
      <button type="button" aria-label="시작"><StartOrb /></button>
      <div className="flex gap-1 ml-[13px]">
        {TASKS.map(([name, TaskIcon, look]) => (
          <button key={name} type="button" aria-label={name} className={`w-[58px] h-[38px] border rounded-[3px] grid place-items-center ${look}`}>
            {TaskIcon ? (
              <TaskIcon />
            ) : (
              <span className="w-8 h-8 bg-[radial-gradient(#4fb3cc,#2486a6)] grid place-items-center text-[22px] leading-8 font-light">FF</span>
            )}
          </button>
        ))}
      </div>

      <div className="ml-auto flex items-center">
        <span className="text-[11px] text-[#cfc8d8] pb-2">KO</span>
        <button type="button" aria-label="IME" className="ml-1.5 pb-1.5">
          <Icon className="w-[17px] h-[17px]">
            <circle cx="7" cy="7" r="6.500" fill="#7fb8d8" />
            <path d="M2 4q4-4 7-3l-1 4-4 2zM5 8l5 1-2 4-3-2zM10 3l3 2v3l-3-1z" fill="#4c9a48" />
            <path d="M16 6.500l-5.500 8-2.500 1.500 .5-3 5.500-7.500z" fill="#e7a74a" stroke="#f6e3c0" strokeWidth=".6" />
          </Icon>
        </button>
        <span className="ml-0.5 w-5 pb-1 text-center text-[22px] leading-6 font-['Liberation_Sans']">A</span>
        <span className="ml-px pb-1 text-[17px] leading-6">漢</span>
        <button type="button" aria-label="도움말" className="ml-1.5 pb-1.5"><HelpIcon /></button>
        <button type="button" aria-label="언어 옵션" className="ml-2 pb-2">
          <svg viewBox="0 0 10 18" className="w-2.5 h-[18px]" aria-hidden="true">
            <path d="M3.500 1.500h5v3h-5zM1.500 3.500h5v3h-5z" fill="#24093e" stroke="#fff" />
            <path d="M2 14h6l-3 3z" fill="#fff" />
          </svg>
        </button>
        <button type="button" aria-label="숨겨진 아이콘 표시" className="ml-[9px]">
          <svg viewBox="0 0 8 5" className="w-2 h-[5px]" aria-hidden="true"><path d="M4 0l4 5H0z" fill="#fff" /></svg>
        </button>
        <Icon className="w-4 h-4 ml-3">
          <path d="M7 4l4-3.500q5-1.500 5 3.500l-4 5z" fill="#a6d62c" />
          <path d="M7 4l5 5-6 6q-5.500 2-6-3.500z" fill="#f2f2f2" />
        </Icon>
        <Icon className="w-4 h-4 ml-2.5">
          <path d="M2 1h1.500v14H2z" fill="#fff" />
          <path d="M4 2h5v1.500h6l-2 2.500 2 2.500H9V8H4z" fill="#fff" />
        </Icon>
        <Icon className="w-4 h-4 ml-2">
          <path d="M1 5.500h2.500L7 2v12l-3.500-3.500H1z" fill="#ddd" stroke="#fff" />
          <path d="M9 6q1.500 2 0 4M11 4q3 4 0 8M13 2.500q4.500 5.500 0 11" fill="none" stroke="#fff" />
        </Icon>
        <Icon className="w-4 h-4 ml-2">
          <path d="M5.500 4.500h10v8h-10zM10.500 12.500v2M7 14.500h7" fill="none" stroke="#fff" strokeWidth="1.300" />
          <path d="M1 2h4v3H4v7h2v1H3V5H1zM1.500 0v2M4.500 0v2" fill="#fff" stroke="#fff" strokeWidth=".7" />
        </Icon>
        <button type="button" className="ml-5 text-center text-xs leading-[17px]">
          <div>22:33</div>
          <div>2017/02/26</div>
        </button>
        <button type="button" aria-label="바탕 화면 보기" className="ml-[13px] w-[13px] h-[38px] border border-[#7d6f90] bg-linear-to-b from-[#6b5d80] to-[#2a1844]" />
      </div>
    </footer>
  );
}

export default function App() {
  return (
    <div className="min-h-screen flex flex-col bg-[#fcfcfc] text-[13px] font-['Open_Sans','Noto_Sans_CJK_KR',sans-serif]" lang="ko">
      <TitleBar />
      <Toolbar />
      <div className="flex-1 flex">
        <Sidebar />
        <FileList />
      </div>
      <DetailsPane />
      <Taskbar />
    </div>
  );
}
